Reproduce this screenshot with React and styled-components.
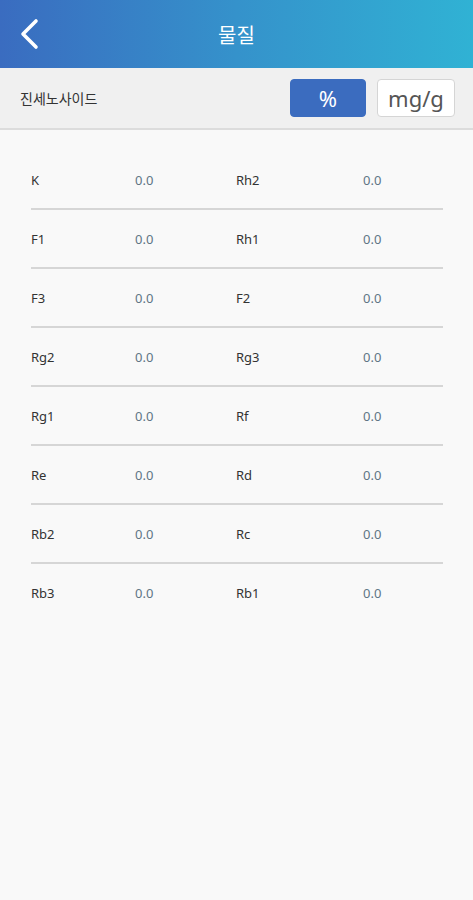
import React from "react";
import styled, { createGlobalStyle } from "styled-components";

const Global = createGlobalStyle`
  html, body { margin: 0; padding: 0; background: #f9f9f9; }
  body { font-family: "Noto Sans", "Noto Sans CJK KR", sans-serif; }
`;

const Page = styled.div`
  width: 473px;
  min-height: 900px;
  background: #f9f9f9;
  display: flex;
  flex-direction: column;
`;

const Header = styled.header`
  height: 68px;
  background: linear-gradient(90deg, #3a6cc0 0%, #3592cb 50%, #30b2d4 100%);
  display: grid;
  grid-template-columns: 60px 1fr 60px;
  align-items: center;
`;

const BackButton = styled.button`
  background: none;
  border: 0;
  padding: 0 0 0 18px;
  height: 68px;
  display: flex;
  align-items: center;
  cursor: pointer;
`;

const Title = styled.h1`
  margin: 0;
  text-align: center;
  color: #fff;
  font-size: 20px;
  font-weight: 400;
  font-family: "Noto Sans CJK KR", sans-serif;
`;

const SubBar = styled.div`
  height: 60px;
  background: #f0f0f0;
  border-bottom: 2px solid #dcdcdc;
  display: flex;
  align-items: center;
  padding: 0 18px 0 20px;
`;

const SubTitle = styled.span`
  flex: 1;
  font-family: "Noto Sans CJK KR", sans-serif;
  font-size: 14px;
  color: #333;
`;

const UnitButton = styled.button`
  width: ${(p) => p.$w}px;
  height: 38px;
  margin-left: ${(p) => p.$ml}px;
  border-radius: 4px;
  border: 1px solid ${(p) => (p.$active ? "#3b6cbf" : "#d5d5d5")};
  background: ${(p) => (p.$active ? "#3b6cbf" : "#fff")};
  color: ${(p) => (p.$active ? "#fff" : "#555")};
  font-family: "Noto Sans", sans-serif;
  font-size: 22px;
  padding: 0;
  line-height: 36px;
`;

const List = styled.div`
  padding: 21px 30px 0 31px;
  display: flex;
  flex-direction: column;
`;

const Row = styled.div`
  display: grid;
  grid-template-columns: 104px 101px 127px 1fr;
  align-items: center;
  height: 57px;
  border-bottom: ${(p) => (p.$last ? "none" : "2px solid #d6d6d6")};
  font-family: "Noto Sans", sans-serif;
  font-size: 13px;
`;

const Label = styled.span`
  color: #333;
`;

const Value = styled.span`
  color: #5f7585;
`;

const rows = [
  ["K", "Rh2"],
  ["F1", "Rh1"],
  ["F3", "F2"],
  ["Rg2", "Rg3"],
  ["Rg1", "Rf"],
  ["Re", "Rd"],
  ["Rb2", "Rc"],
  ["Rb3", "Rb1"],
];

export default function App() {
  return (
    <Page>
      <Global />
      <Header>
        <BackButton aria-label="back">
          <svg width="22" height="32" viewBox="0 0 22 32">
            <path d="M18 3 L5 16 L18 29" fill="none" stroke="#fff" strokeWidth="3.6" strokeLinecap="round" strokeLinejoin="round" />
          </svg>
        </BackButton>
        <Title>물질</Title>
        <span />
      </Header>
      <SubBar>
        <SubTitle>진세노사이드</SubTitle>
        <UnitButton $active $w={76} $ml={0}>%</UnitButton>
        <UnitButton $w={78} $ml={11}>mg/g</UnitButton>
      </SubBar>
      <List>
        {rows.map(([a, b], i) => (
          <Row key={a} $last={i === rows.length - 1}>
            <Label>{a}</Label>
            <Value>0.0</Value>
            <Label>{b}</Label>
            <Value>0.0</Value>
          </Row>
        ))}
      </List>
    </Page>
  );
}
